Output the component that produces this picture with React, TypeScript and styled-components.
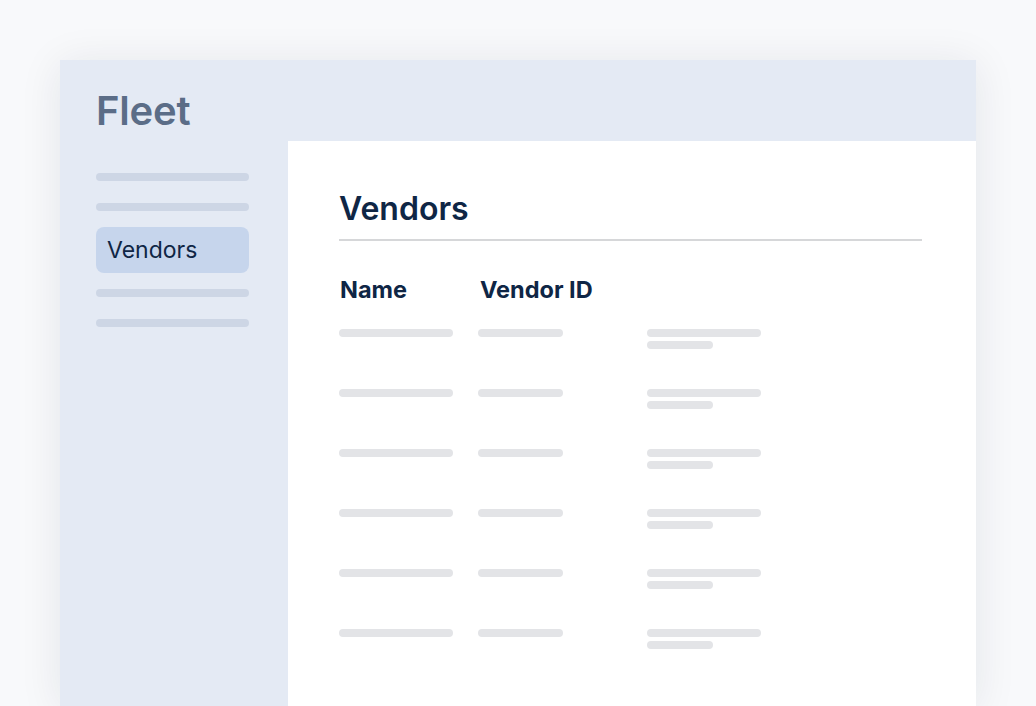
import React from 'react';
import styled, { createGlobalStyle } from 'styled-components';

const GlobalStyle = createGlobalStyle`
  html, body {
    margin: 0;
    height: 100%;
    overflow: hidden;
    background: #f8f9fb;
    font-family: Inter, "Noto Sans", sans-serif;
  }
`;

const Page = styled.div`
  padding: 60px 60px 0 60px;
`;

const Window = styled.div`
  width: 916px;
  height: 646px;
  display: flex;
  flex-direction: column;
  background: #e4eaf4;
  box-shadow: 0 4px 40px rgba(20, 30, 50, 0.09);
`;

const Header = styled.div`
  height: 81px;
  box-sizing: border-box;
  padding: 27px 0 0 36px;
  h1 {
    margin: 0;
    font-size: 40px;
    line-height: 48px;
    font-weight: 600;
    color: #5b6d87;
    letter-spacing: -0.2px;
  }
`;

const Body = styled.div`
  flex: 1;
  display: flex;
`;

const Sidebar = styled.div`
  width: 228px;
  padding: 32px 39px 0 36px;
  box-sizing: border-box;
  display: flex;
  flex-direction: column;
`;

const NavBar = styled.div<{ $gap: number }>`
  height: 8px;
  border-radius: 4px;
  background: #cdd6e5;
  margin-bottom: ${p => p.$gap}px;
`;

const NavActive = styled.div`
  height: 46px;
  border-radius: 8px;
  background: #c6d5ec;
  display: flex;
  align-items: center;
  padding-left: 11px;
  font-size: 23px;
  color: #0f2645;
  margin-bottom: 16px;
`;

const Content = styled.div`
  flex: 1;
  background: #ffffff;
  padding: 49px 54px 0 51px;
`;

const Title = styled.h2`
  margin: 0;
  font-size: 32px;
  line-height: 38px;
  font-weight: 600;
  color: #0f2645;
  padding-bottom: 11px;
  border-bottom: 2px solid #d6d7d9;
`;

const Grid = styled.div`
  display: grid;
  grid-template-columns: 139px 169px 1fr;
  margin-top: 34px;
`;

const HeadCell = styled.div<{ $shift?: number }>`
  font-size: 23.5px;
  line-height: 29px;
  font-weight: 700;
  color: #0f2645;
  padding-left: ${p => p.$shift || 0}px;
  margin-bottom: 25px;
`;

const Cell = styled.div`
  height: 60px;
  display: flex;
  flex-direction: column;
  gap: 4px;
`;

const Line = styled.div<{ $w: number }>`
  width: ${p => p.$w}px;
  height: 8px;
  border-radius: 4px;
  background: #e3e4e7;
`;

const rows = [0, 1, 2, 3, 4, 5];

export default function App() {
  return (
    <>
      <GlobalStyle />
      <Page>
        <Window>
          <Header>
            <h1>Fleet</h1>
          </Header>
          <Body>
            <Sidebar>
              <NavBar $gap={22} />
              <NavBar $gap={16} />
              <NavActive>Vendors</NavActive>
              <NavBar $gap={22} />
              <NavBar $gap={0} />
            </Sidebar>
            <Content>
              <Title>Vendors</Title>
              <Grid>
                <HeadCell $shift={1}>Name</HeadCell>
                <HeadCell $shift={2}>Vendor ID</HeadCell>
                <HeadCell />
                {rows.map(r => (
                  <React.Fragment key={r}>
                    <Cell>
                      <Line $w={114} />
                    </Cell>
                    <Cell>
                      <Line $w={85} />
                    </Cell>
                    <Cell>
                      <Line $w={114} />
                      <Line $w={66} />
                    </Cell>
                  </React.Fragment>
                ))}
              </Grid>
            </Content>
          </Body>
        </Window>
      </Page>
    </>
  );
}
